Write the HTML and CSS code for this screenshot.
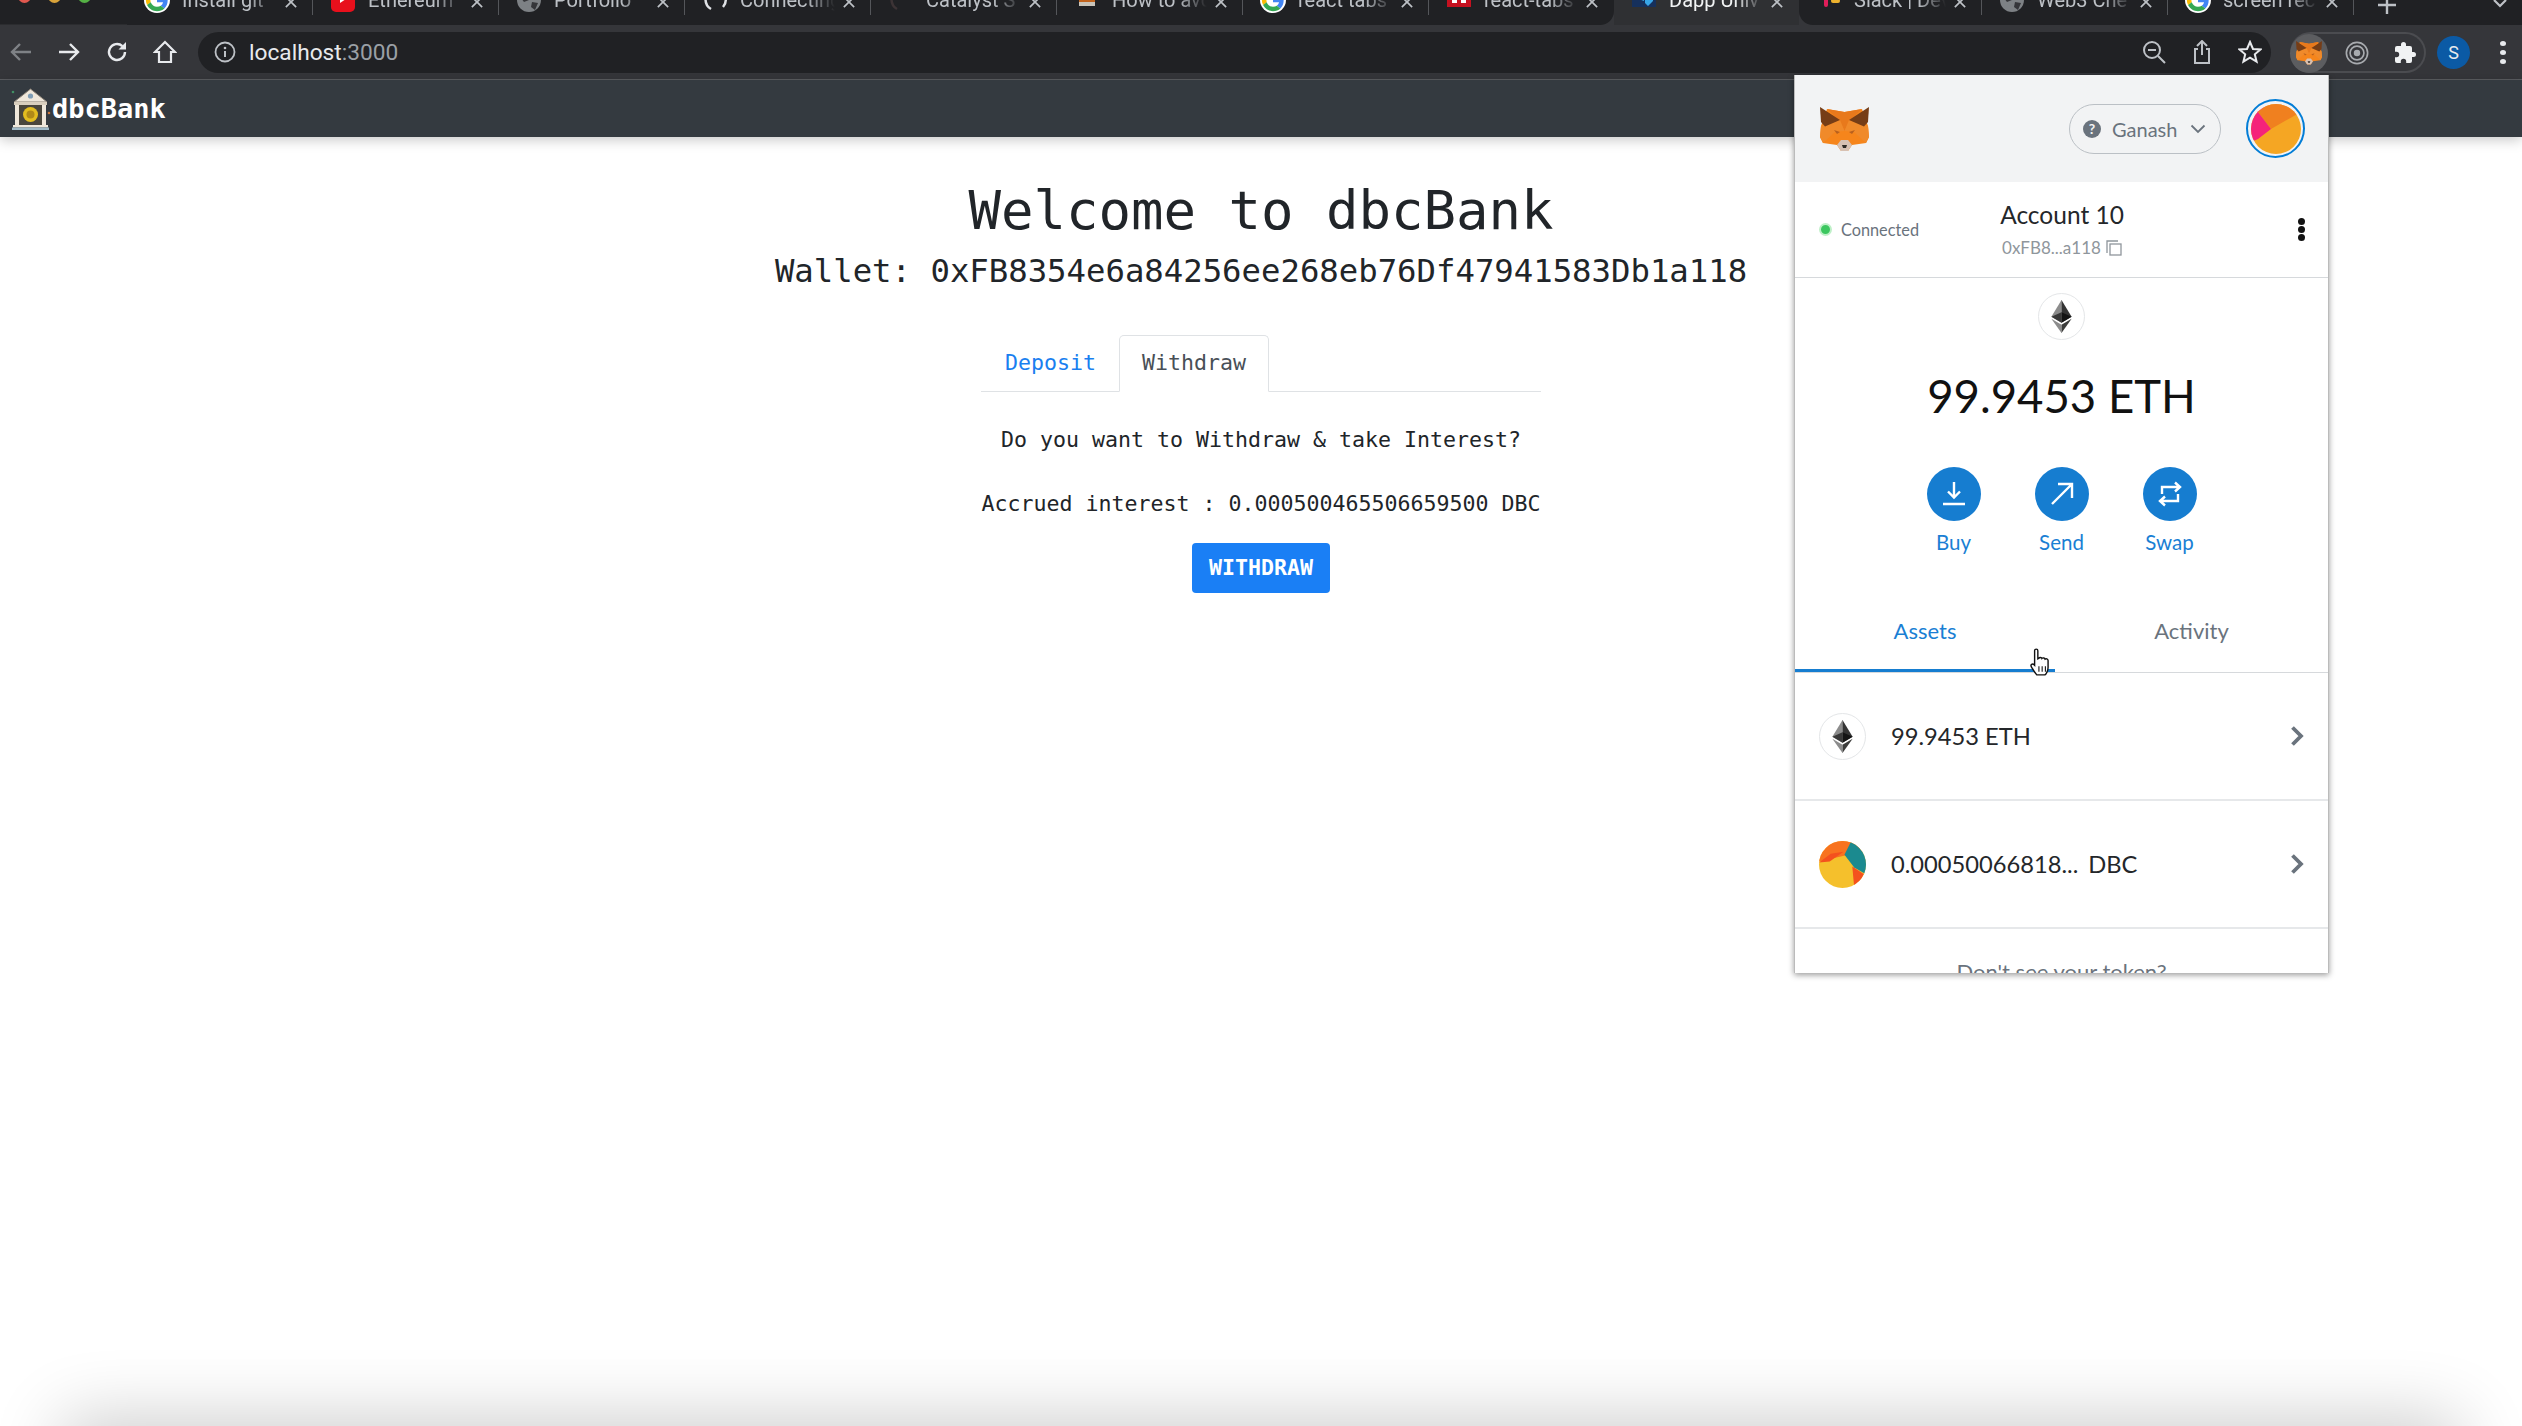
FILE: index.html
```html
<!DOCTYPE html>
<html lang="en">
<head>
  <meta charset="UTF-8" />
  <title>dbcBank</title>
  <link rel="stylesheet" href="styles.css">
</head>
<body>
  <svg class="icon-defs" aria-hidden="true">
    <symbol id="g-icon" viewBox="-4 -4 56 56">
      <circle cx="24" cy="24" r="28" fill="#fff"/>
      <path fill="#EA4335" d="M24 9.5c3.54 0 6.71 1.22 9.21 3.6l6.85-6.85C35.9 2.38 30.47 0 24 0 14.62 0 6.51 5.38 2.56 13.22l7.98 6.19C12.43 13.72 17.74 9.5 24 9.5z"/>
      <path fill="#4285F4" d="M46.98 24.55c0-1.57-.15-3.09-.38-4.55H24v9.02h12.94c-.58 2.96-2.26 5.48-4.78 7.18l7.73 6c4.51-4.18 7.09-10.36 7.09-17.65z"/>
      <path fill="#FBBC05" d="M10.53 28.59c-.48-1.45-.76-2.99-.76-4.59s.27-3.14.76-4.59l-7.98-6.19C.92 16.46 0 20.12 0 24c0 3.88.92 7.54 2.56 10.78l7.97-6.19z"/>
      <path fill="#34A853" d="M24 48c6.48 0 11.93-2.13 15.89-5.81l-7.73-6c-2.15 1.45-4.92 2.3-8.16 2.3-6.26 0-11.57-4.22-13.47-9.91l-7.98 6.19C6.51 42.62 14.62 48 24 48z"/>
    </symbol>
    <symbol id="globe-icon" viewBox="0 0 26 26">
      <circle cx="13" cy="13" r="12" fill="#7d8185"/>
      <path d="M5 5l7 3 1 5-5 2-3-4zM16 15l6 1-3 7-4-3z" fill="#35363a"/>
    </symbol>
    <symbol id="close-icon" viewBox="0 0 14 14">
      <path d="M1 1l12 12M13 1L1 13" stroke="#bdc1c6" stroke-width="2" fill="none"/>
    </symbol>
    <symbol id="fox-icon" viewBox="0 0 49 45">
      <polygon points="7,2 24.500,5 42,2 48,19 49,30 46,36 32,38 28,44 21,44 17,38 3,36 0,30 1,19" fill="#f6851b"/>
      <polygon points="7,2 24.500,5 42,2 30,13 24.500,24 19,13" fill="#e8791c"/>
      <polygon points="1,19 20,13 24.500,24 15,25 3,36 0,30" fill="#f08a2a"/>
      <polygon points="48,19 29,13 24.500,24 34,25 46,36 49,30" fill="#f08a2a"/>
      <polygon points="0,0 20,13 5,19.500 1,15" fill="#763d16"/>
      <polygon points="49,0 29,13 44,19.500 48,15" fill="#763d16"/>
      <polygon points="14,23 20,25 17,27" fill="#b8601e"/>
      <polygon points="35,23 29,25 32,27" fill="#b8601e"/>
      <polygon points="17,38 21,33 28,33 32,38 28,44 21,44" fill="#d7c1b3"/>
      <polygon points="22,38 27,38 26,41 23,41" fill="#2f2a26"/>
    </symbol>
    <symbol id="eth-icon" viewBox="0 0 256 417">
      <polygon fill="#343434" points="127.961,0 125.166,9.5 125.166,285.168 127.961,287.958 255.923,212.32"/>
      <polygon fill="#8c8c8c" points="127.962,0 0,212.32 127.962,287.959 127.962,154.158"/>
      <polygon fill="#3c3c3b" points="127.961,312.187 126.386,314.107 126.386,412.306 127.961,416.907 256,236.587"/>
      <polygon fill="#8c8c8c" points="127.962,416.905 127.962,312.185 0,236.585"/>
      <polygon fill="#141414" points="127.961,287.958 255.921,212.321 127.961,154.159"/>
      <polygon fill="#393939" points="0,212.321 127.96,287.958 127.96,154.159"/>
    </symbol>
    <symbol id="chevron-icon" viewBox="0 0 14 22">
      <path d="M2.500 2.500l8.500 8.500-8.500 8.500" stroke="#6a737d" stroke-width="3.800" fill="none"/>
    </symbol>
  </svg>

  <div class="browser">
    <div class="tabstrip">
      <div class="lights">
        <span class="light light-red"></span>
        <span class="light light-yellow"></span>
        <span class="light light-green"></span>
      </div>
      <div class="tab">
        <svg class="favicon"><use href="#g-icon"/></svg>
        <span class="tab-title">Install git</span>
        <svg class="tab-close"><use href="#close-icon"/></svg>
      </div>
      <div class="tab">
        <svg class="favicon" viewBox="0 0 26 26"><rect x="1" y="1" width="24" height="24" rx="5" fill="#e8101c"/><polygon points="10,4 19,10 10,16" fill="#fff"/></svg>
        <span class="tab-title">Ethereum</span>
        <svg class="tab-close"><use href="#close-icon"/></svg>
      </div>
      <div class="tab">
        <svg class="favicon"><use href="#globe-icon"/></svg>
        <span class="tab-title">Portfolio</span>
        <svg class="tab-close"><use href="#close-icon"/></svg>
      </div>
      <div class="tab">
        <svg class="favicon" viewBox="0 0 26 26"><path d="M9 22A11 11 0 0 1 9 3M18 3a11 11 0 0 1 3 17" stroke="#dfe1e5" stroke-width="2.5" fill="none"/></svg>
        <span class="tab-title">Connecting</span>
        <svg class="tab-close"><use href="#close-icon"/></svg>
      </div>
      <div class="tab">
        <svg class="favicon" viewBox="0 0 26 26"><path d="M9 22A11 11 0 0 1 9 3" stroke="#3c3335" stroke-width="2.5" fill="none"/></svg>
        <span class="tab-title tab-title-dim">Catalyst S</span>
        <svg class="tab-close"><use href="#close-icon"/></svg>
      </div>
      <div class="tab">
        <svg class="favicon" viewBox="0 0 26 26"><rect x="5" y="0" width="16" height="15" fill="#c2641e"/><rect x="5" y="15" width="16" height="4" fill="#c9c4ba"/></svg>
        <span class="tab-title">How to avo</span>
        <svg class="tab-close"><use href="#close-icon"/></svg>
      </div>
      <div class="tab tab-before-gap">
        <svg class="favicon"><use href="#g-icon"/></svg>
        <span class="tab-title">react tabs</span>
        <svg class="tab-close"><use href="#close-icon"/></svg>
      </div>
      <div class="tab tab-before-active">
        <svg class="favicon" viewBox="0 0 26 26"><rect x="1" y="-4" width="24" height="24" fill="#c51120"/><rect x="6" y="-4" width="5" height="20" fill="#fff"/><rect x="15" y="-4" width="5" height="20" fill="#fff"/></svg>
        <span class="tab-title">react-tabs</span>
        <svg class="tab-close"><use href="#close-icon"/></svg>
      </div>
      <div class="tab tab-active">
        <svg class="favicon" viewBox="0 0 26 26"><rect x="1" y="0" width="24" height="20" fill="#16305c"/><path d="M5 2l8 3v9l-8-3zM14 7l8-3v10l-5 5-3-3z" fill="#38a6e8"/></svg>
        <span class="tab-title">Dapp Univ</span>
        <svg class="tab-close"><use href="#close-icon"/></svg>
      </div>
      <div class="tab tab-after-active">
        <svg class="favicon" viewBox="0 0 26 26"><rect x="3" y="5" width="9" height="4" rx="2" fill="#e01e5a"/><rect x="8" y="11" width="4" height="9" rx="2" fill="#e01e5a"/><rect x="15" y="1" width="4" height="9" rx="2" fill="#ecb22e"/><rect x="15" y="12" width="9" height="4" rx="2" fill="#ecb22e"/></svg>
        <span class="tab-title">Slack | Dev</span>
        <svg class="tab-close"><use href="#close-icon"/></svg>
      </div>
      <div class="tab">
        <svg class="favicon"><use href="#globe-icon"/></svg>
        <span class="tab-title">Web3 Che</span>
        <svg class="tab-close"><use href="#close-icon"/></svg>
      </div>
      <div class="tab">
        <svg class="favicon"><use href="#g-icon"/></svg>
        <span class="tab-title">screen rec</span>
        <svg class="tab-close"><use href="#close-icon"/></svg>
      </div>
      <div class="tabstrip-end">
        <svg class="new-tab" viewBox="0 0 24 24"><path d="M12 0v14M3 5h18" stroke="#bdc1c6" stroke-width="2.4" fill="none"/></svg>
        <svg class="tab-list" viewBox="0 0 16 10"><path d="M2 0l6 6 6-6" stroke="#bdc1c6" stroke-width="2.2" fill="none"/></svg>
      </div>
    </div>

    <div class="toolbar">
      <div class="nav-btn"><svg viewBox="0 0 24 24"><path d="M22 12H3M11 4l-8 8 8 8" stroke="#7f8286" stroke-width="2.4" fill="none"/></svg></div>
      <div class="nav-btn"><svg viewBox="0 0 24 24"><path d="M2 12h19M13 4l8 8-8 8" stroke="#e8eaed" stroke-width="2.4" fill="none"/></svg></div>
      <div class="nav-btn"><svg viewBox="0 0 24 24"><path d="M20 12a8 8 0 1 1-2.6-5.9" stroke="#e8eaed" stroke-width="2.4" fill="none"/><polygon points="21,2 21,9.500 13.500,9.500" fill="#e8eaed"/></svg></div>
      <div class="nav-btn"><svg viewBox="0 0 24 24"><path d="M12 2L2 12h4v10h12V12h4z" stroke="#e8eaed" stroke-width="2.2" fill="none"/></svg></div>

      <div class="address">
        <svg class="info-icon" viewBox="0 0 22 22"><circle cx="11" cy="11" r="9.500" stroke="#bdc1c6" stroke-width="1.800" fill="none"/><path d="M11 10v6" stroke="#bdc1c6" stroke-width="2"/><circle cx="11" cy="7" r="1.300" fill="#bdc1c6"/></svg>
        <span class="url">localhost<span class="url-port">:3000</span></span>
        <div class="address-icons">
          <div class="nav-btn"><svg viewBox="0 0 24 24"><circle cx="10" cy="10" r="8" stroke="#bdc1c6" stroke-width="2" fill="none"/><path d="M6 10h8M16 16l7 7" stroke="#bdc1c6" stroke-width="2" fill="none"/></svg></div>
          <div class="nav-btn"><svg viewBox="0 0 24 24"><path d="M8 9H5v14h14V9h-3M12 15V1M7 6l5-5 5 5" stroke="#bdc1c6" stroke-width="2" fill="none"/></svg></div>
          <div class="nav-btn"><svg viewBox="0 0 24 24"><polygon points="12,2 15,9 22.500,9.500 16.800,14.300 18.600,21.700 12,17.700 5.400,21.700 7.200,14.300 1.500,9.500 9,9" stroke="#e8eaed" stroke-width="2" fill="none"/></svg></div>
        </div>
      </div>

      <div class="ext-pill">
        <div class="ext-item ext-item-on"><svg class="ext-fox"><use href="#fox-icon"/></svg></div>
        <div class="ext-item"><svg viewBox="0 0 26 26" class="ext-svg"><circle cx="13" cy="13" r="11.500" stroke="#a8abaf" stroke-width="1.800" fill="none"/><circle cx="13" cy="13" r="7.500" stroke="#a8abaf" stroke-width="1.800" fill="none"/><circle cx="13" cy="13" r="3.500" fill="#a8abaf"/></svg></div>
        <div class="ext-item"><svg viewBox="0 0 24 24" class="ext-svg"><path d="M20.500 11H19V7a2 2 0 0 0-2-2h-4V3.500a2.500 2.500 0 0 0-5 0V5H4a2 2 0 0 0-2 2v3.800h1.500a2.700 2.700 0 0 1 0 5.400H2V20a2 2 0 0 0 2 2h3.800v-1.500a2.700 2.700 0 0 1 5.400 0V22H17a2 2 0 0 0 2-2v-4h1.500a2.500 2.500 0 0 0 0-5z" fill="#f1f3f4"/></svg></div>
      </div>
      <div class="profile">S</div>
      <div class="chrome-menu"><span></span><span></span><span></span></div>
    </div>

    <header class="site-nav">
      <svg class="bank-logo" viewBox="0 0 40 42">
        <circle cx="2" cy="4" r="1.300" fill="#3f8f63"/>
        <circle cx="38" cy="25" r="1.300" fill="#c9763a"/>
        <polygon points="19.500,1 36,14 3,14" fill="#efe7da" stroke="#8a8175"/>
        <circle cx="19.500" cy="8" r="2.600" fill="#7f9db5"/>
        <rect x="3" y="14" width="33" height="3" fill="#d9cfbe"/>
        <rect x="6" y="17" width="27" height="20" fill="#4a463c"/>
        <rect x="4" y="17" width="4" height="20" fill="#efe7da"/>
        <rect x="31" y="17" width="4" height="20" fill="#efe7da"/>
        <circle cx="19.500" cy="26.500" r="7.500" fill="#e3bd1f"/>
        <circle cx="19.500" cy="26.500" r="4" fill="#b08a18"/>
        <rect x="2" y="37" width="35" height="2.500" fill="#efe7da"/>
        <rect x="1" y="39.500" width="37" height="2.500" fill="#9fb9c6"/>
      </svg>
      <span class="brand">dbcBank</span>
    </header>
  </div>

  <main class="page">
    <h1 class="welcome">Welcome to dbcBank</h1>
    <h2 class="wallet">Wallet: 0xFB8354e6a84256ee268eb76Df47941583Db1a118</h2>
    <section class="bank-panel">
      <nav class="bank-tabs">
        <a class="bank-tab">Deposit</a>
        <a class="bank-tab bank-tab-active">Withdraw</a>
      </nav>
      <p class="panel-text">Do you want to Withdraw &amp; take Interest?</p>
      <p class="panel-text">Accrued interest : 0.000500465506659500 DBC</p>
      <button class="withdraw-btn">WITHDRAW</button>
    </section>
  </main>

  <div class="bottom-shade"></div>

  <aside class="metamask">
    <div class="mm-header">
      <svg class="mm-fox"><use href="#fox-icon"/></svg>
      <div class="mm-header-right">
        <div class="mm-network">
          <span class="mm-network-q">?</span>
          <span class="mm-network-name">Ganash</span>
          <svg class="mm-network-caret" viewBox="0 0 16 10"><path d="M1.500 1.500L8 8l6.500-6.500" stroke="#6a737d" stroke-width="1.800" fill="none"/></svg>
        </div>
        <div class="mm-avatar-ring">
          <svg class="mm-avatar" viewBox="0 0 50 50">
            <rect width="50" height="50" fill="#f5a623"/>
            <polygon points="7,8 17,0 50,0 50,8 20,25" fill="#f0801f"/>
            <polygon points="0,0 17,0 7,8 20,25 7,35 0,38" fill="#f5237a"/>
          </svg>
        </div>
      </div>
    </div>

    <div class="mm-account">
      <div class="mm-connected"><span class="mm-dot"></span>Connected</div>
      <div class="mm-account-info">
        <div class="mm-account-name">Account 10</div>
        <div class="mm-account-addr">0xFB8...a118
          <svg class="mm-copy" viewBox="0 0 16 16"><path d="M1 13V1h11" stroke="#8f969c" stroke-width="1.300" fill="none"/><rect x="4" y="4" width="11" height="11" stroke="#8f969c" stroke-width="1.300" fill="none"/></svg>
        </div>
      </div>
      <div class="mm-kebab"><span></span><span></span><span></span></div>
    </div>

    <div class="mm-balance">
      <div class="eth-badge"><svg class="eth-mark"><use href="#eth-icon"/></svg></div>
      <div class="mm-amount">99.9453 ETH</div>
      <div class="mm-actions">
        <div class="mm-action">
          <div class="mm-action-circle"><svg viewBox="0 0 26 26"><path d="M13 1v15M7 10.500l6 6 6-6M2 23h22" stroke="#fff" stroke-width="2.400" fill="none"/></svg></div>
          <span>Buy</span>
        </div>
        <div class="mm-action">
          <div class="mm-action-circle"><svg viewBox="0 0 26 26"><path d="M3 23L22 4M9 3h14v14" stroke="#fff" stroke-width="2.400" fill="none"/></svg></div>
          <span>Send</span>
        </div>
        <div class="mm-action">
          <div class="mm-action-circle"><svg viewBox="0 0 26 26"><path d="M5 13V6h17M18 1.500L23 6l-5 4.500M21 13v7H4M8 15.500L3 20l5 4.500" stroke="#fff" stroke-width="2.400" fill="none"/></svg></div>
          <span>Swap</span>
        </div>
      </div>
    </div>

    <div class="mm-tabs">
      <div class="mm-tab mm-tab-active">Assets</div>
      <div class="mm-tab">Activity</div>
    </div>

    <div class="mm-token">
      <div class="eth-badge"><svg class="eth-mark"><use href="#eth-icon"/></svg></div>
      <span class="mm-token-name">99.9453 ETH</span>
      <svg class="mm-chevron"><use href="#chevron-icon"/></svg>
    </div>
    <div class="mm-token">
      <svg class="jazz-icon" viewBox="0 0 48 48">
        <rect width="48" height="48" fill="#f5c02c"/>
        <polygon points="0,0 48,0 48,10 30,14 0,21" fill="#f8731f"/>
        <polygon points="33,0 48,0 48,34 36,27 26,14" fill="#1b8a8f"/>
        <polygon points="34,26 46,34 38,48 36,48" fill="#f4511e"/>
        <polygon points="25,11 11,21 0,22 12,13" fill="#f4511e"/>
      </svg>
      <span class="mm-token-name mm-token-long">0.00050066818... DBC</span>
      <svg class="mm-chevron"><use href="#chevron-icon"/></svg>
    </div>
    <div class="mm-help">Don't see your token?</div>

    <svg class="hand-cursor" viewBox="0 0 22 26"><path d="M6 2.500c0-2 3-2 3 0V10l1-.5c.4-1 2.500-1 2.800.2 .6-.8 2.700-.6 2.900.6 .8-.6 2.800-.2 2.800 1.400V18c0 3-1.800 6.500-3 7H8c-1.200-1.500-3-4-5-7.500-1.200-2 1-3.500 2.500-2L6 16z" fill="#fff" stroke="#111" stroke-width="1.300"/><path d="M10 17v5M13 17v5M16 17v5" stroke="#111" stroke-width="1"/></svg>
  </aside>
</body>
</html>
```

FILE: styles.css
```css
* {
  box-sizing: border-box;
}

html, body {
  margin: 0;
  height: 1426px;
  overflow: hidden;
}

body {
  position: relative;
  background: #fff;
  font-family: "DejaVu Sans Mono", monospace;
  color: #212529;
}

.icon-defs {
  display: none;
}

/* browser chrome */
.browser {
  position: relative;
  z-index: 1;
}

.tabstrip {
  display: flex;
  height: 25px;
  background: #35363a;
  overflow: hidden;
  font-family: Roboto, sans-serif;
}

.lights {
  display: flex;
  gap: 17px;
  width: 127px;
  height: 25px;
  padding-left: 18px;
  background: #202124;
  border-bottom: 1px solid #2b2c2f;
}

.light {
  width: 13px;
  height: 13px;
  margin-top: -10px;
  border-radius: 50%;
}

.light-red { background: #e0584f; }
.light-yellow { background: #d9a33a; }
.light-green { background: #55b145; }

.tab {
  position: relative;
  flex: none;
  display: flex;
  align-items: center;
  width: 186px;
  height: 25px;
  padding: 0 16px 0 17px;
  background: #202124;
  color: #bdc1c6;
  font-size: 20px;
}

.tab::after {
  content: "";
  position: absolute;
  right: 0;
  top: 0;
  width: 1px;
  height: 15px;
  background: #54565a;
}

.tab-before-active,
.tab-active {
  width: 185px;
}

.tab-before-active {
  border-bottom-right-radius: 14px;
}

.tab-after-active {
  width: 183px;
  border-bottom-left-radius: 14px;
}

.tab-active {
  background: #2f3033;
  color: #f1f3f4;
}

.tab-active::after,
.tab-before-active::after {
  display: none;
}

.favicon {
  flex: none;
  width: 26px;
  height: 26px;
  margin-top: -26px;
}

.tab-title {
  flex: 1;
  min-width: 0;
  margin: -26px 8px 0 12px;
  white-space: nowrap;
  overflow: hidden;
  -webkit-mask-image: linear-gradient(to right, #000 70%, transparent 100%);
  mask-image: linear-gradient(to right, #000 70%, transparent 100%);
}

.tab-close {
  flex: none;
  width: 12px;
  height: 12px;
  margin-top: -21px;
}

.tabstrip-end {
  flex: 1;
  position: relative;
  display: flex;
  align-items: flex-start;
  background: #202124;
  padding-left: 21px;
}

.new-tab {
  width: 24px;
  height: 24px;
}

.tab-list {
  width: 16px;
  height: 10px;
  margin-left: 93px;
}

.toolbar {
  display: flex;
  align-items: center;
  height: 55px;
  padding-left: 0;
  background: #35363a;
  border-bottom: 1px solid #5b5d61;
  margin-left: -3px;
}

.nav-btn {
  flex: none;
  display: flex;
  align-items: center;
  justify-content: center;
  width: 48px;
  height: 40px;
}

.nav-btn svg {
  width: 24px;
  height: 24px;
}

.address {
  flex: none;
  display: flex;
  align-items: center;
  width: 2073px;
  height: 41px;
  margin-left: 9px;
  padding-left: 16px;
  background: #202124;
  border-radius: 21px;
}

.info-icon {
  width: 22px;
  height: 22px;
}

.url {
  margin-left: 13px;
  font-family: Roboto, sans-serif;
  font-size: 22.7px;
  color: #e8eaed;
}

.url-port {
  color: #9aa0a6;
}

.address-icons {
  display: flex;
  margin-left: auto;
  margin-right: -3px;
}

.ext-pill {
  flex: none;
  display: flex;
  gap: 10px;
  width: 136px;
  height: 41px;
  margin-left: 19px;
  border: 2px solid #4b4c50;
  border-left: 0;
  border-radius: 21px;
}

.ext-item {
  flex: none;
  display: flex;
  align-items: center;
  justify-content: center;
  width: 38px;
  height: 39px;
}

.ext-item-on {
  background: #5c5d60;
  border-radius: 50%;
}

.ext-fox {
  width: 26px;
  height: 26px;
}

.ext-svg {
  width: 24px;
  height: 26px;
}

.profile {
  flex: none;
  width: 33px;
  height: 33px;
  margin-left: 11px;
  border-radius: 50%;
  background: #0b5aa5;
  color: #e8eaed;
  font: 18px/33px Roboto, sans-serif;
  text-align: center;
}

.chrome-menu {
  flex: none;
  display: flex;
  flex-direction: column;
  gap: 4px;
  margin-left: 30px;
}

.chrome-menu span {
  display: block;
  width: 6px;
  height: 5px;
  border-radius: 50%;
  background: #e8eaed;
}

.site-nav {
  display: flex;
  align-items: center;
  height: 57px;
  padding-left: 11px;
  background: #343a40;
  box-shadow: 0 3px 12px rgba(0, 0, 0, 0.22);
}

.bank-logo {
  width: 40px;
  height: 42px;
}

.brand {
  margin-left: 1px;
  color: #fff;
  font-size: 27px;
  font-weight: bold;
}

/* dapp page */
.page {
  display: flex;
  flex-direction: column;
  align-items: center;
}

.welcome {
  margin: 41px 0 9px;
  font-size: 54px;
  line-height: 65px;
  font-weight: normal;
}

.wallet {
  margin: 0 0 44px;
  font-size: 32.3px;
  line-height: 39px;
  font-weight: normal;
}

.bank-panel {
  display: flex;
  flex-direction: column;
  align-items: center;
  font-size: 21.6px;
}

.bank-tabs {
  display: flex;
  align-self: stretch;
  height: 57px;
  border-bottom: 1px solid #dfe2e5;
}

.bank-tab {
  height: 57px;
  padding: 0 21.5px 0 22.5px;
  border: 1px solid transparent;
  border-radius: 5px 5px 0 0;
  color: #1a7ff0;
  line-height: 53px;
}

.bank-tab-active {
  color: #495057;
  background: #fff;
  border-color: #dfe2e5 #dfe2e5 #fff;
}

.panel-text {
  margin: 32px 0 0;
  line-height: 32px;
  white-space: nowrap;
}

.withdraw-btn {
  width: 138px;
  height: 50px;
  margin-top: 23px;
  padding: 0 0 2px;
  border: 0;
  border-radius: 4px;
  background: #1a7ff5;
  color: #fff;
  font-family: "DejaVu Sans Mono", monospace;
  font-size: 21.6px;
  font-weight: bold;
}

.bottom-shade {
  position: absolute;
  left: 70px;
  right: 70px;
  bottom: -70px;
  height: 70px;
  box-shadow: 0 0 70px 8px rgba(0, 0, 0, 0.2);
}

/* metamask popup */
.metamask {
  position: absolute;
  z-index: 2;
  left: 1794px;
  top: 75px;
  width: 535px;
  height: 898px;
  background: #fff;
  border-left: 1px solid #bbb;
  border-right: 1px solid #bbb;
  box-shadow: 0 2px 6px rgba(0, 0, 0, 0.4);
  overflow: hidden;
  font-family: Lato, sans-serif;
  color: #24272a;
}

.mm-header {
  display: flex;
  align-items: center;
  justify-content: space-between;
  height: 107px;
  padding: 0 23px 0 25px;
  background: #f2f3f4;
}

.mm-fox {
  width: 49px;
  height: 45px;
  margin-top: 2px;
}

.mm-header-right {
  display: flex;
  align-items: center;
  gap: 25px;
}

.mm-network {
  display: flex;
  align-items: center;
  width: 152px;
  height: 50px;
  padding-left: 13px;
  border: 1px solid #bbc0c5;
  border-radius: 25px;
  color: #6a737d;
  font-size: 20px;
}

.mm-network-q {
  width: 18px;
  height: 18px;
  border-radius: 50%;
  background: #6a737d;
  color: #f2f3f4;
  font-size: 14px;
  font-weight: bold;
  line-height: 18px;
  text-align: center;
}

.mm-network-name {
  margin-left: 11px;
}

.mm-network-caret {
  width: 16px;
  height: 10px;
  margin-left: 13px;
}

.mm-avatar-ring {
  display: flex;
  align-items: center;
  justify-content: center;
  width: 59px;
  height: 59px;
  border: 2.5px solid #037dd6;
  border-radius: 50%;
}

.mm-avatar {
  width: 50px;
  height: 50px;
  border-radius: 50%;
}

.mm-account {
  display: grid;
  grid-template-columns: 1fr auto 1fr;
  align-items: center;
  height: 96px;
  padding: 0 23px 0 24px;
  border-bottom: 1px solid #d6d9dc;
}

.mm-connected {
  display: flex;
  align-items: center;
  color: #6a737d;
  font-size: 16.3px;
}

.mm-dot {
  width: 13px;
  height: 13px;
  margin-right: 9px;
  border: 2px solid #bff0c8;
  border-radius: 50%;
  background: #3cc75f;
}

.mm-account-info {
  padding-bottom: 2px;
  text-align: center;
}

.mm-account-name {
  font-size: 24.5px;
  line-height: 30px;
}

.mm-account-addr {
  display: flex;
  align-items: center;
  justify-content: center;
  gap: 5px;
  margin-top: 8px;
  color: #8f969c;
  font-size: 17px;
  line-height: 20px;
}

.mm-copy {
  width: 16px;
  height: 16px;
}

.mm-kebab {
  display: flex;
  flex-direction: column;
  gap: 1px;
  justify-self: end;
}

.mm-kebab span {
  display: block;
  width: 7px;
  height: 7px;
  border-radius: 50%;
  background: #111;
}

.mm-balance {
  display: flex;
  flex-direction: column;
  align-items: center;
  padding-top: 15px;
}

.eth-badge {
  flex: none;
  display: flex;
  align-items: center;
  justify-content: center;
  width: 47px;
  height: 47px;
  border: 1px solid #e4e6e8;
  border-radius: 50%;
}

.eth-mark {
  width: 21px;
  height: 33px;
}

.mm-amount {
  margin-top: 26px;
  font-size: 45.5px;
  line-height: 60px;
  color: #111;
}

.mm-actions {
  display: flex;
  margin-top: 41px;
}

.mm-action {
  display: flex;
  flex-direction: column;
  align-items: center;
  width: 108px;
  color: #1a7fd4;
  font-size: 20.5px;
  line-height: 26px;
}

.mm-action-circle {
  display: flex;
  align-items: center;
  justify-content: center;
  width: 54px;
  height: 54px;
  margin-bottom: 8px;
  border-radius: 50%;
  background: #167dd0;
}

.mm-action-circle svg {
  width: 26px;
  height: 26px;
}

.mm-tabs {
  display: flex;
  height: 57px;
  margin-top: 61px;
  border-bottom: 1px solid #d6d9dc;
  font-size: 22px;
  line-height: 30px;
  color: #6a737d;
}

.mm-tab {
  flex: 1;
  text-align: center;
}

.mm-tab-active {
  flex: none;
  width: 260px;
  border-bottom: 3px solid #167dd0;
  color: #1a7fd4;
}

.mm-token {
  display: flex;
  align-items: center;
  height: 128px;
  padding: 0 24px 0 24px;
  border-bottom: 2px solid #e6e8ea;
  font-size: 23.7px;
}

.jazz-icon {
  flex: none;
  width: 47px;
  height: 47px;
  border-radius: 50%;
}

.mm-token-name {
  flex: 1;
  margin-left: 25px;
  color: #24272a;
}

.mm-token-long {
  word-spacing: 4px;
}

.mm-chevron {
  width: 14px;
  height: 22px;
}

.mm-help {
  margin-top: 31px;
  color: #6a737d;
  font-size: 22px;
  line-height: 24px;
  text-align: center;
}

.hand-cursor {
  position: absolute;
  left: 233px;
  top: 573px;
  width: 24px;
  height: 28px;
}
```
